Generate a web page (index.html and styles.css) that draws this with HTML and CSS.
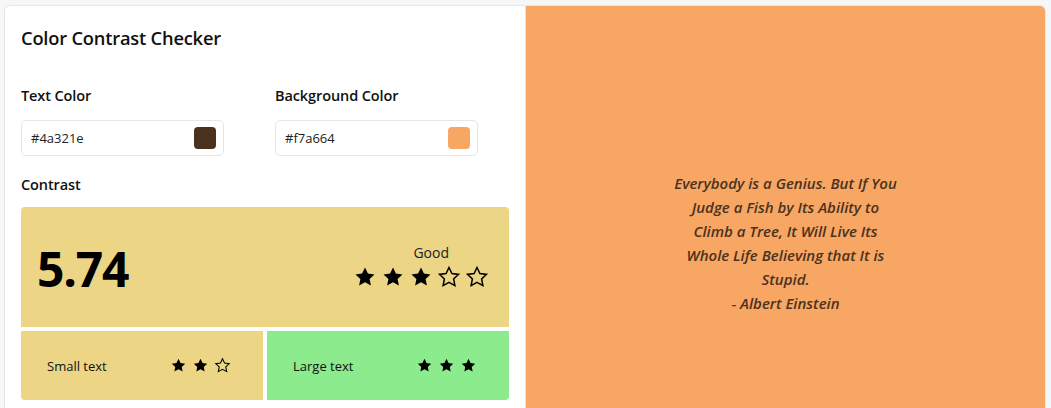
FILE: index.html
```html
<!DOCTYPE html>
<html>
<head>
<meta charset="utf-8">
<link rel="stylesheet" href="styles.css">
</head>
<body>
<div class="card">
  <section class="panel">
    <h1 class="title">Color Contrast Checker</h1>
    <div class="fields">
      <div class="field">
        <div class="label">Text Color</div>
        <div class="input"><span class="value">#4a321e</span><span class="swatch swatch-text"></span></div>
      </div>
      <div class="field">
        <div class="label">Background Color</div>
        <div class="input"><span class="value">#f7a664</span><span class="swatch swatch-bg"></span></div>
      </div>
    </div>
    <div class="label contrast-label">Contrast</div>
    <div class="result">
      <div class="ratio">5.74</div>
      <div class="rating">
        <div class="rating-text">Good</div>
        <div class="stars big">
          <svg viewBox="0 0 24 24"><path class="on" d="M12 2.5l2.9 6.1 6.6.8-4.9 4.6 1.3 6.6L12 17.3l-5.9 3.3 1.3-6.6-4.9-4.6 6.6-.8z"/></svg>
          <svg viewBox="0 0 24 24"><path class="on" d="M12 2.5l2.9 6.1 6.6.8-4.9 4.6 1.3 6.6L12 17.3l-5.9 3.3 1.3-6.6-4.9-4.6 6.6-.8z"/></svg>
          <svg viewBox="0 0 24 24"><path class="on" d="M12 2.5l2.9 6.1 6.6.8-4.9 4.6 1.3 6.6L12 17.3l-5.9 3.3 1.3-6.6-4.9-4.6 6.6-.8z"/></svg>
          <svg viewBox="0 0 24 24"><path class="off" d="M12 2.5l2.9 6.1 6.6.8-4.9 4.6 1.3 6.6L12 17.3l-5.9 3.3 1.3-6.6-4.9-4.6 6.6-.8z"/></svg>
          <svg viewBox="0 0 24 24"><path class="off" d="M12 2.5l2.9 6.1 6.6.8-4.9 4.6 1.3 6.6L12 17.3l-5.9 3.3 1.3-6.6-4.9-4.6 6.6-.8z"/></svg>
        </div>
      </div>
    </div>
    <div class="sizes">
      <div class="size size-small">
        <span class="size-name">Small text</span>
        <div class="stars small">
          <svg viewBox="0 0 24 24"><path class="on" d="M12 2.5l2.9 6.1 6.6.8-4.9 4.6 1.3 6.6L12 17.3l-5.9 3.3 1.3-6.6-4.9-4.6 6.6-.8z"/></svg>
          <svg viewBox="0 0 24 24"><path class="on" d="M12 2.5l2.9 6.1 6.6.8-4.9 4.6 1.3 6.6L12 17.3l-5.9 3.3 1.3-6.6-4.9-4.6 6.6-.8z"/></svg>
          <svg viewBox="0 0 24 24"><path class="off" d="M12 2.5l2.9 6.1 6.6.8-4.9 4.6 1.3 6.6L12 17.3l-5.9 3.3 1.3-6.6-4.9-4.6 6.6-.8z"/></svg>
        </div>
      </div>
      <div class="size size-large">
        <span class="size-name">Large text</span>
        <div class="stars small">
          <svg viewBox="0 0 24 24"><path class="on" d="M12 2.5l2.9 6.1 6.6.8-4.9 4.6 1.3 6.6L12 17.3l-5.9 3.3 1.3-6.6-4.9-4.6 6.6-.8z"/></svg>
          <svg viewBox="0 0 24 24"><path class="on" d="M12 2.5l2.9 6.1 6.6.8-4.9 4.6 1.3 6.6L12 17.3l-5.9 3.3 1.3-6.6-4.9-4.6 6.6-.8z"/></svg>
          <svg viewBox="0 0 24 24"><path class="on" d="M12 2.5l2.9 6.1 6.6.8-4.9 4.6 1.3 6.6L12 17.3l-5.9 3.3 1.3-6.6-4.9-4.6 6.6-.8z"/></svg>
        </div>
      </div>
    </div>
  </section>
  <section class="preview">
    <p class="quote">Everybody is a Genius. But If You Judge a Fish by Its Ability to Climb a Tree, It Will Live Its Whole Life Believing that It is Stupid.<br>- Albert Einstein</p>
  </section>
</div>
</body>
</html>
```

FILE: styles.css
```css
html, body {
  margin: 0;
  padding: 0;
  overflow: hidden;
  background: #f7f7f7;
}
body {
  font-family: "Open Sans", "Noto Sans", sans-serif;
  color: #111;
  padding: 5px 0 0 4px;
}
.card {
  display: flex;
  width: 1042px;
  height: 476px;
  background: #fff;
  border: 1px solid #e6e6e6;
  border-radius: 6px;
  box-sizing: border-box;
  overflow: hidden;
}
.panel {
  width: 521px;
  flex-shrink: 0;
  box-sizing: border-box;
  padding: 18px 16px 16px 16px;
  border-right: 1px solid #e3e3e3;
}
.title {
  margin: 0;
  font-size: 18.3px;
  font-weight: 600;
  line-height: 28px;
  letter-spacing: -0.2px;
}
.fields {
  display: flex;
  margin-top: 34px;
}
.field {
  width: 254px;
  flex-shrink: 0;
}
.field + .field {
  width: auto;
  flex: 1;
}
.label {
  font-size: 14.5px;
  font-weight: 600;
  line-height: 20px;
  letter-spacing: -0.1px;
}
.input {
  margin-top: 14px;
  width: 203px;
  height: 36px;
  box-sizing: border-box;
  border: 1px solid #e6e6e6;
  border-radius: 5px;
  display: flex;
  align-items: center;
  justify-content: space-between;
  padding: 0 7px 0 9px;
}
.value {
  font-size: 13px;
  color: #222;
}
.swatch {
  width: 22px;
  height: 22px;
  border-radius: 4px;
}
.swatch-text { background: #4a321e; }
.swatch-bg { background: #f7a664; }
.contrast-label {
  margin-top: 19px;
}
.result {
  margin-top: 12px;
  height: 120px;
  background: #ecd584;
  border-radius: 4px 4px 0 0;
  display: flex;
  align-items: center;
  justify-content: space-between;
  padding: 0 20px 0 16px;
}
.ratio {
  font-size: 48px;
  font-weight: 700;
  line-height: 1;
  color: #000;
  letter-spacing: -1.2px;
  margin-top: 4px;
}
.rating {
  display: flex;
  flex-direction: column;
  align-items: flex-end;
  margin-top: -2px;
}
.rating-text {
  font-size: 14px;
  line-height: 18px;
  color: #222;
  margin-right: 40px;
  margin-bottom: 3px;
}
.stars {
  display: flex;
}
.stars svg { display: block; }
.stars .on { fill: #000; }
.stars .off { fill: none; stroke: #000; stroke-width: 1.5; stroke-linejoin: miter; }
.stars.big { gap: 4px; }
.stars.big svg { width: 24px; height: 24px; }
.stars.small { gap: 5px; }
.stars.small svg { width: 17px; height: 17px; }
.sizes {
  margin-top: 4px;
  display: flex;
  gap: 4px;
}
.size {
  flex: 1;
  height: 69px;
  display: flex;
  align-items: center;
  justify-content: space-between;
  padding: 0 32px 0 26px;
}
.size-small {
  background: #ecd584;
  border-radius: 0 0 0 4px;
}
.size-large {
  background: #8ceb8c;
  border-radius: 0 0 4px 0;
}
.size-name {
  font-size: 13px;
  color: #111;
}
.preview {
  flex: 1;
  background: #f7a664;
  display: flex;
  align-items: center;
  justify-content: center;
}
.quote {
  margin: 0;
  width: 226px;
  text-align: center;
  font-style: italic;
  font-weight: 600;
  font-size: 15px;
  line-height: 24px;
  color: #4a321e;
}
```
